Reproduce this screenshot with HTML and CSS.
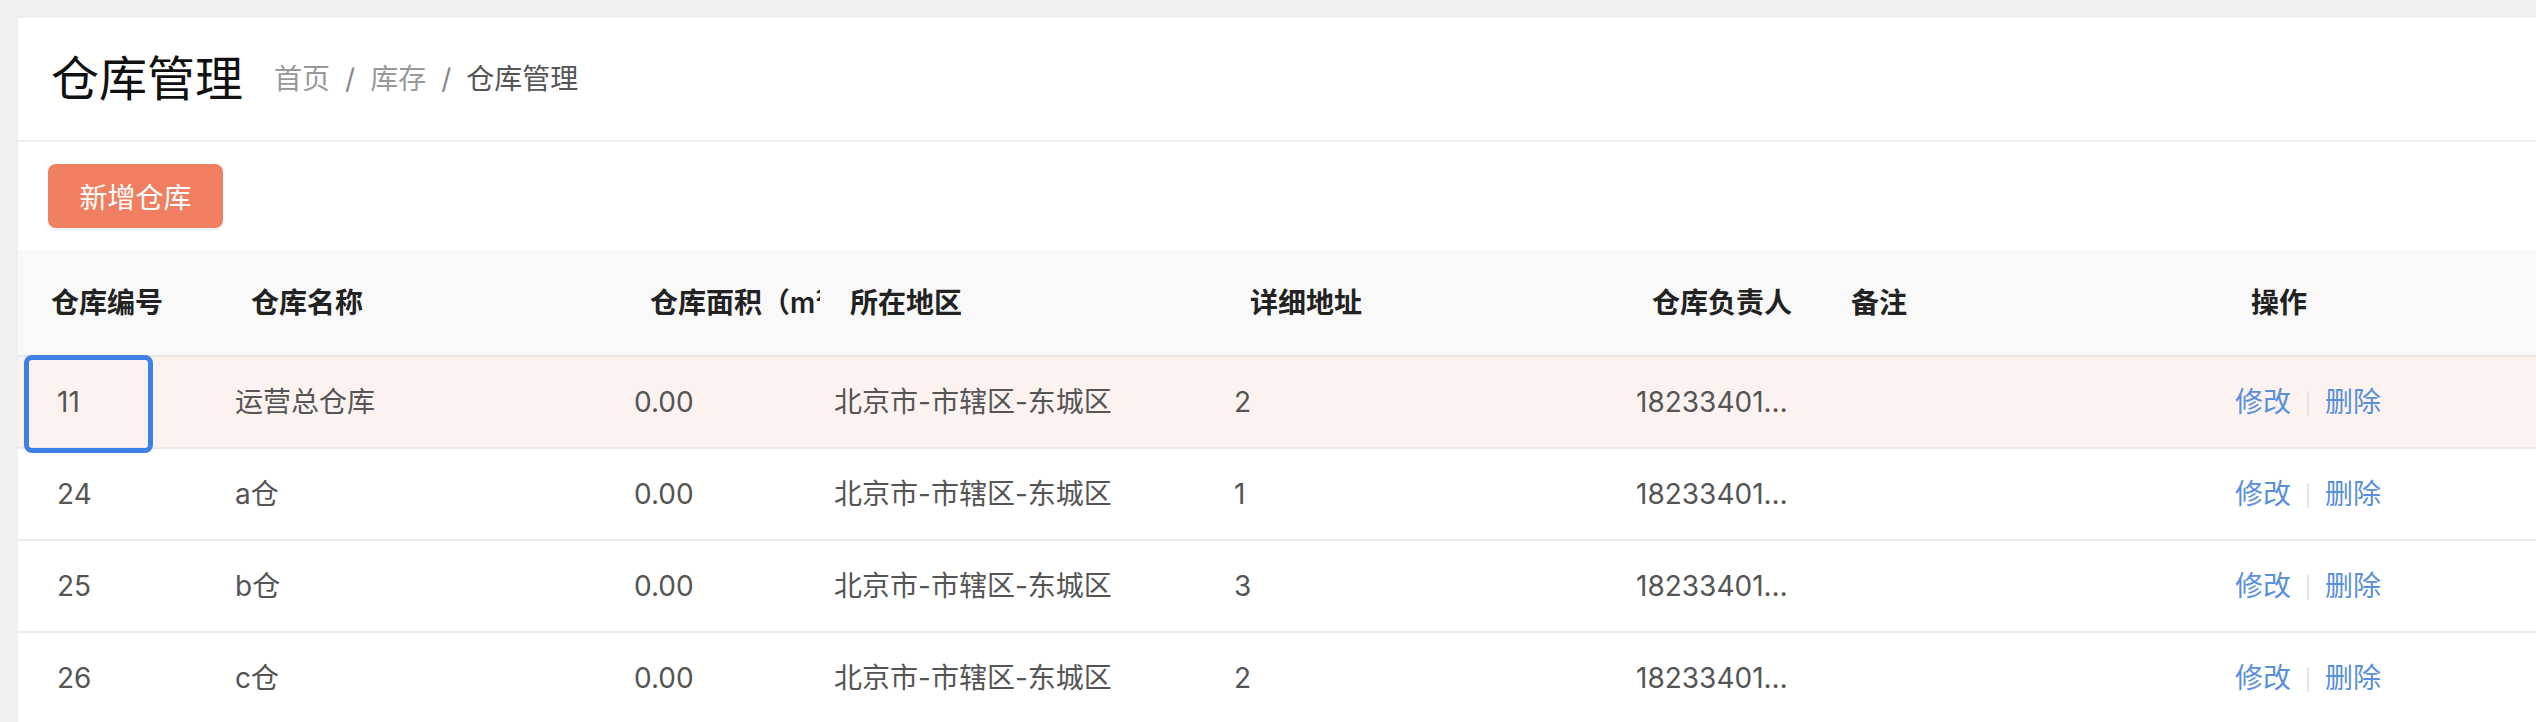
FILE: index.html
```html
<!DOCTYPE html>
<html lang="zh-CN">
<head>
    <meta charset="UTF-8">
    <meta name="viewport" content="width=device-width, initial-scale=1.0">
    <title>仓库管理</title>
    <link rel="stylesheet" href="styles.css">
</head>
<body>
    <div class="panel">
        <div class="page-head">
            <h1 class="page-title">仓库管理</h1>
            <div class="breadcrumb">
                <a class="crumb">首页</a>
                <span class="sep">/</span>
                <a class="crumb">库存</a>
                <span class="sep">/</span>
                <span class="crumb current">仓库管理</span>
            </div>
        </div>

        <div class="toolbar">
            <button class="btn-add">新增仓库</button>
        </div>

        <table class="data-table">
            <colgroup>
                <col class="w-id">
                <col class="w-name">
                <col class="w-area">
                <col class="w-region">
                <col class="w-addr">
                <col class="w-owner">
                <col class="w-remark">
                <col>
            </colgroup>
            <thead>
                <tr>
                    <th class="first">仓库编号</th>
                    <th>仓库名称</th>
                    <th>仓库面积（m²）</th>
                    <th>所在地区</th>
                    <th>详细地址</th>
                    <th>仓库负责人</th>
                    <th>备注</th>
                    <th>操作</th>
                </tr>
            </thead>
            <tbody>
                <tr class="current-row">
                    <td class="first focused"><span class="focus-ring"></span>11</td>
                    <td>运营总仓库</td>
                    <td>0.00</td>
                    <td>北京市-市辖区-东城区</td>
                    <td>2</td>
                    <td class="ellipsis">18233401234</td>
                    <td></td>
                    <td><a class="op">修改</a><span class="op-sep"></span><a class="op">删除</a></td>
                </tr>
                <tr>
                    <td class="first">24</td>
                    <td>a仓</td>
                    <td>0.00</td>
                    <td>北京市-市辖区-东城区</td>
                    <td>1</td>
                    <td class="ellipsis">18233401234</td>
                    <td></td>
                    <td><a class="op">修改</a><span class="op-sep"></span><a class="op">删除</a></td>
                </tr>
                <tr>
                    <td class="first">25</td>
                    <td>b仓</td>
                    <td>0.00</td>
                    <td>北京市-市辖区-东城区</td>
                    <td>3</td>
                    <td class="ellipsis">18233401234</td>
                    <td></td>
                    <td><a class="op">修改</a><span class="op-sep"></span><a class="op">删除</a></td>
                </tr>
                <tr>
                    <td class="first">26</td>
                    <td>c仓</td>
                    <td>0.00</td>
                    <td>北京市-市辖区-东城区</td>
                    <td>2</td>
                    <td class="ellipsis">18233401234</td>
                    <td></td>
                    <td><a class="op">修改</a><span class="op-sep"></span><a class="op">删除</a></td>
                </tr>
            </tbody>
        </table>
    </div>
</body>
</html>
```

FILE: styles.css
```css
body {
    margin: 0;
    padding: 18px 0 0 18px;
    background: #efefef;
    font-family: Inter, "Noto Sans CJK SC", sans-serif;
    color: #555;
    overflow: hidden;
}
.panel {
    background: #fff;
    min-height: 704px;
}
.page-head {
    height: 122px;
    display: flex;
    align-items: center;
    padding: 0 33px;
    border-bottom: 2px solid #efefef;
}
.page-title {
    margin: 0;
    font-size: 48px;
    font-weight: normal;
    line-height: 1;
    color: #111;
}
.breadcrumb {
    display: flex;
    align-items: center;
    margin-left: 31px;
    font-size: 28px;
    line-height: 1;
}
.crumb {
    color: #999;
}
.crumb.current {
    color: #555;
}
.sep {
    color: #888;
    margin: 0 15px;
}
.toolbar {
    padding: 22px 30px;
}
.btn-add {
    display: block;
    width: 175px;
    height: 64px;
    border: none;
    border-radius: 8px;
    background: #f07f61;
    color: #fff;
    font-family: inherit;
    font-size: 28px;
    box-shadow: 0 3px 0 rgba(0,0,0,0.05);
}
.data-table {
    width: 100%;
    border-collapse: separate;
    border-spacing: 0;
    table-layout: fixed;
    font-size: 28px;
    line-height: 28px;
}
.w-id { width: 203px; }
.w-name { width: 399px; }
.w-area { width: 200px; }
.w-region { width: 400px; }
.w-addr { width: 402px; }
.w-owner { width: 199px; }
.w-remark { width: 400px; }
.data-table th {
    background: #f9f9f9;
    color: #222;
    font-weight: 600;
    text-align: left;
    padding: 39px 0 38px 30px;
    border-bottom: 2px solid #e6e6e6;
    white-space: nowrap;
    overflow: hidden;
}
.data-table th.first {
    padding-left: 33px;
}
.data-table td {
    padding: 31px 14px;
    border-bottom: 2px solid #ebebeb;
    white-space: nowrap;
}
.data-table td.first {
    padding-left: 39px;
}
.current-row td {
    background: #fcf3f1;
}
.data-table td.ellipsis {
    padding-right: 24px;
    overflow: hidden;
    text-overflow: ellipsis;
}
.focused {
    position: relative;
}
.focus-ring {
    position: absolute;
    left: 6px;
    top: -2px;
    width: 129px;
    height: 98px;
    box-sizing: border-box;
    border: 5px solid #3f80e6;
    border-radius: 8px;
}
.op {
    color: #5a8fdc;
}
.op-sep {
    display: inline-block;
    width: 2px;
    height: 25px;
    margin: 3px 16px 0;
    background: #e6e6e6;
    vertical-align: top;
}
```
